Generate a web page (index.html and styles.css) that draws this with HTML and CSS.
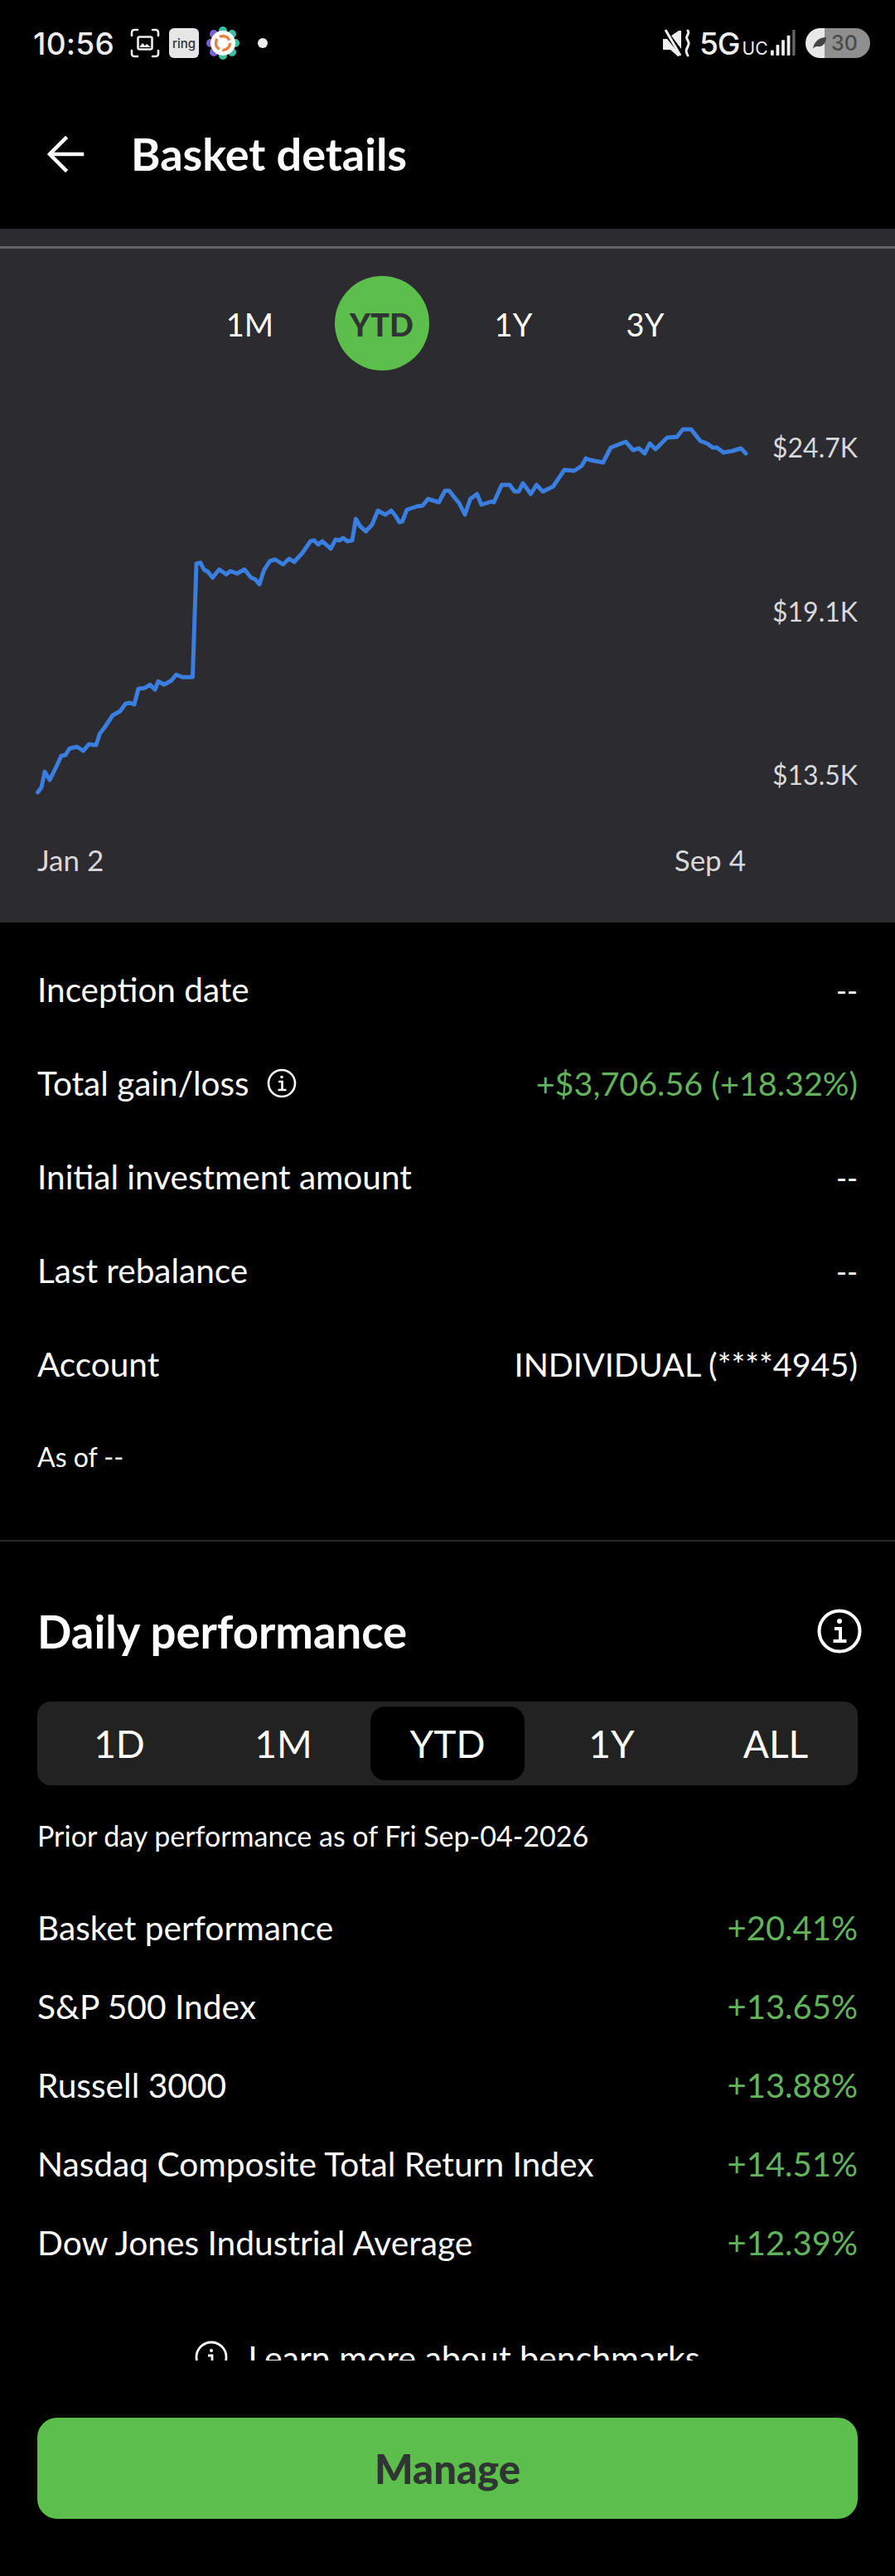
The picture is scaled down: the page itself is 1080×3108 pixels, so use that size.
FILE: index.html
```html
<!DOCTYPE html>
<html lang="en">
<head>
<meta charset="utf-8">
<title>Basket details</title>
<link rel="stylesheet" href="styles.css">
</head>
<body>
<div class="screen">
  <div class="status">
    <div class="status-left">
      <span class="clock">10:56</span>
      <svg class="ic-shot" viewBox="0 0 36 36" width="36" height="36" fill="none" stroke="#eee" stroke-width="2.6" stroke-linecap="round">
        <path d="M2 9V5a3 3 0 0 1 3-3h4M27 2h4a3 3 0 0 1 3 3v4M34 27v4a3 3 0 0 1-3 3h-4M9 34H5a3 3 0 0 1-3-3v-4"/>
        <rect x="9.500" y="10.500" width="17" height="15" rx="2"/>
        <path d="M11 23l4-5 3 3 2-2 5 4z" fill="#eee" stroke="none"/>
      </svg>
      <span class="ring">ring</span>
      <svg class="ic-flower" viewBox="0 0 40 40" width="40" height="40">
        <g fill="#7a63d8"><circle cx="9" cy="9" r="5"/><circle cx="5" cy="20" r="5"/><circle cx="9" cy="31" r="5"/></g>
        <g fill="#3dbfa4"><circle cx="20" cy="5" r="5"/><circle cx="31" cy="9" r="5"/><circle cx="35" cy="20" r="5"/><circle cx="31" cy="31" r="5"/><circle cx="20" cy="35" r="5"/></g>
        <circle cx="20" cy="20" r="15" fill="#fff"/>
        <circle cx="20" cy="20" r="8.500" fill="none" stroke="#e8803f" stroke-width="3.400" stroke-dasharray="14 3.800"/>
      </svg>
      <span class="dot"></span>
    </div>
    <div class="status-right">
      <svg class="ic-mute" viewBox="0 0 34 34" width="34" height="34" fill="#eee">
        <path d="M0 12h5L19 29v4l-1 0-9-8H0zM10 8l9-6h3v22z"/>
        <path d="M3 1l18 31" stroke="#eee" stroke-width="3"/>
        <path d="M30 2c3 4-3 6-1 10s3 5 1 9-3 6 0 11" fill="none" stroke="#eee" stroke-width="3" stroke-linecap="round"/>
      </svg>
      <span class="net">5G<small>UC</small></span>
      <svg class="ic-signal" viewBox="0 0 32 34" width="30" height="34" fill="#eee">
        <rect x="0" y="26" width="4" height="7" rx="1"/>
        <rect x="7" y="19" width="4" height="14" rx="1"/>
        <rect x="14" y="13" width="4" height="20" rx="1"/>
        <rect x="21" y="7" width="4" height="26" rx="1"/>
        <rect x="28" y="0" width="3.500" height="33" fill="#666"/>
      </svg>
      <span class="battery">
        <svg class="leaf" viewBox="0 0 18 16" width="18" height="16"><path d="M1 15C2 7 8 1 17 1c0 8-5 12-11 11-2 0-4 1-5 3z" fill="#444"/></svg>
        <span class="battery-num">30</span>
      </span>
    </div>
  </div>

  <div class="appbar">
    <svg class="ic-back" viewBox="0 0 48 48" width="48" height="48" fill="none" stroke="#fff" stroke-width="4.500" stroke-linecap="square">
      <path d="M44 24H6M24 5L5 24l19 19"/>
    </svg>
    <h1 class="title">Basket details</h1>
  </div>

  <div class="scroll">
    <section class="chart-panel">
      <div class="panel-rule"></div>
      <div class="range-tabs">
        <span class="range-tab">1M</span>
        <span class="range-tab range-tab-on">YTD</span>
        <span class="range-tab">1Y</span>
        <span class="range-tab">3Y</span>
      </div>
      <div class="plot">
        <svg class="plot-line" viewBox="40 500 870 470" width="870" height="470" fill="none" stroke="#3a7ee0" stroke-width="5" stroke-linejoin="round" stroke-linecap="round">
          <path d="M45.500 956L50 950 54 931 60 941 67 927 74 912 79 911 84 903 93 901 100.500 906 107 898 116 899 120.500 885 126 878 136 863 145 858 151.500 849 157 848 162 850 167 831 175 830 181 826 187 832 191 822 198 826 207 821 212.500 814 220 817 232.500 817 237 680 242 679 246 687 251 690 256.500 697 264.500 687 273 693 278 689 286 692 295 687 303 697 308 699 313 705 318.500 688 325.500 677 332 675 341.500 681 349 674 355 678 365 667 374.600 653 379 652 384 657 389 653 399 662 405 651 410 652 414 649 419 653 425 652 429.400 626 434.600 635 441.500 641 449 633 456 616 465 621 472 616 477 622 482 630 485.500 629 491 615 503 611 510 610 516.500 602 529.600 606 537 592 542 592 549 601 554 607 561 621 567.500 602 575.500 596 581 609 593 605 596 606 605.400 585 615 585 621 593 626 593 631 583 640.500 596 647.400 585 655 593 667.400 587 681 567 693 568 702 562 707 553 712 555 727.700 558 737 540 755 533 764 543 771 541 778 547 784 535 791 542 805 528 817 527 824 518 834 518 845 532 853 535 860 540 865 540 873 546 884 544 894 541 900 547"/>
        </svg>
        <div class="y-axis">
          <span>$24.7K</span>
          <span>$19.1K</span>
          <span>$13.5K</span>
        </div>
      </div>
      <div class="x-axis">
        <span>Jan 2</span>
        <span>Sep 4</span>
      </div>
    </section>

    <section class="facts">
      <div class="fact"><span>Inception date</span><span class="fact-empty">--</span></div>
      <div class="fact">
        <span class="with-icon">Total gain/loss
          <svg class="ic-info-sm" viewBox="0 0 36 36" width="36" height="36" fill="none" stroke="#fff" stroke-width="2.600">
            <circle cx="18" cy="18" r="16"/>
            <path d="M14 16h4.500v10M13.500 26h10"/>
            <circle cx="18" cy="10.500" r="1.800" fill="#fff" stroke="none"/>
          </svg>
        </span>
        <span class="gain fact-value">+$3,706.56 (+18.32%)</span>
      </div>
      <div class="fact"><span>Initial investment amount</span><span class="fact-empty">--</span></div>
      <div class="fact"><span>Last rebalance</span><span class="fact-empty">--</span></div>
      <div class="fact"><span>Account</span><span class="fact-value">INDIVIDUAL (****4945)</span></div>
      <div class="as-of">As of --</div>
    </section>

    <section class="daily">
      <div class="daily-head">
        <h2 class="daily-title">Daily performance</h2>
        <svg class="ic-info-lg" viewBox="0 0 54 54" width="54" height="54" fill="none" stroke="#fff" stroke-width="4">
          <circle cx="27" cy="27" r="24.500"/>
          <path d="M21 24h7v15M19.500 39h16"/>
          <circle cx="27" cy="15" r="3" fill="#fff" stroke="none"/>
        </svg>
      </div>
      <div class="segments">
        <span class="segment">1D</span>
        <span class="segment">1M</span>
        <span class="segment segment-on">YTD</span>
        <span class="segment">1Y</span>
        <span class="segment">ALL</span>
      </div>
      <p class="prior">Prior day performance as of Fri Sep-04-2026</p>
      <div class="perf"><span>Basket performance</span><span class="gain perf-value">+20.41%</span></div>
      <div class="perf"><span>S&amp;P 500 Index</span><span class="gain perf-value">+13.65%</span></div>
      <div class="perf"><span>Russell 3000</span><span class="gain perf-value">+13.88%</span></div>
      <div class="perf"><span>Nasdaq Composite Total Return Index</span><span class="gain perf-value">+14.51%</span></div>
      <div class="perf"><span>Dow Jones Industrial Average</span><span class="gain perf-value">+12.39%</span></div>
      <div class="learn">
        <svg class="ic-info-md" viewBox="0 0 40 40" width="40" height="40" fill="none" stroke="#fff" stroke-width="2.800">
          <circle cx="20" cy="20" r="18"/>
          <path d="M16 18h5v11M15 29h11"/>
          <circle cx="20" cy="12" r="2" fill="#fff" stroke="none"/>
        </svg>
        <span>Learn more about benchmarks</span>
      </div>
    </section>
  </div>

  <div class="footer">
    <button class="manage" type="button">Manage</button>
  </div>
</div>
</body>
</html>
```

FILE: styles.css
```css
* { box-sizing: border-box; }
html, body { margin: 0; padding: 0; background: #000; }
body { font-family: "Lato", "Noto Sans", sans-serif; color: #fff; }
.screen { width: 1080px; height: 3108px; overflow: hidden; background: #000; }

/* status bar */
.status { height: 104px; padding: 0 30px 0 40px; display: flex; align-items: center; justify-content: space-between; }
.status-left, .status-right { display: flex; align-items: center; }
.clock { font-family: "Inter", sans-serif; font-size: 37px; font-weight: 500; color: #eee; letter-spacing: 0.3px; width: 117px; }
.ic-shot { margin-right: 11px; }
.ring { width: 36px; height: 36px; border-radius: 6px; background: #e6e6e6; color: #333; font-family: "Inter", sans-serif; font-size: 15px; font-weight: 500; display: flex; align-items: center; justify-content: center; margin-right: 9px; }
.dot { width: 12px; height: 12px; border-radius: 50%; background: #eee; margin-left: 22px; }
.ic-mute { margin-right: 10px; }
.net { font-family: "Inter", sans-serif; font-size: 37px; font-weight: 500; color: #eee; letter-spacing: -1px; width: 86px; white-space: nowrap; }
.net small { font-size: 21px; letter-spacing: 0; font-weight: 400; margin-left: 3px; }
.ic-signal { margin-right: 12px; }
.battery { width: 78px; height: 36px; border-radius: 18px; background: linear-gradient(to right, #e8e8e8 0 30%, #8f8f8f 30% 100%); display: flex; align-items: center; padding-left: 8px; gap: 5px; }
.battery-num { font-family: "Inter", sans-serif; font-size: 25px; font-weight: 500; color: #4a4a4a; line-height: 1; }

/* app bar */
.appbar { height: 172px; padding: 0 0 8px 55px; display: flex; align-items: center; gap: 55px; }
.title { margin: 0; font-size: 54px; font-weight: 700; line-height: 1.2; }

.scroll { height: 2572px; overflow: hidden; }

/* chart panel */
.chart-panel { height: 837px; background: #2b2b30; padding-top: 21px; }
.panel-rule { height: 3px; background: #636367; }
.range-tabs { display: flex; justify-content: center; gap: 45px; margin-top: 33px; }
.range-tab { width: 114px; height: 114px; border-radius: 50%; padding-top: 2px; display: flex; align-items: center; justify-content: center; font-size: 38px; color: #fff; }
.range-tab-on { background: #5cbf4c; color: #2f3532; font-weight: 900; }
.plot { display: flex; margin-top: 53px; padding: 0 45px 0 40px; }
.plot-line { flex: none; display: block; }
.y-axis { margin-left: auto; height: 470px; padding: 20px 0 15px; display: flex; flex-direction: column; justify-content: space-between; align-items: flex-end; font-size: 32px; line-height: 40px; color: #d8d8da; }
.x-axis { display: flex; justify-content: space-between; width: 900px; padding-left: 45px; margin-top: 47px; font-size: 35px; line-height: 40px; color: #d8d8da; }

/* facts */
.facts { padding: 24px 45px 46px; border-bottom: 2px solid #2a2a2a; }
.fact { height: 113px; display: flex; align-items: center; justify-content: space-between; font-size: 40.500px; }
.fact-value { font-size: 39.500px; }
.fact-empty { font-size: 35px; }
.with-icon { display: flex; align-items: center; gap: 21px; }
.gain { color: #62b35a; }
.as-of { height: 110px; display: flex; align-items: center; font-size: 32px; }

/* daily */
.daily { padding: 0 45px; }
.daily-head { height: 80px; margin-top: 68px; display: flex; align-items: center; justify-content: space-between; }
.daily-title { margin: 0; font-size: 54.500px; font-weight: 700; }
.ic-info-lg { margin-right: -5px; }
.segments { display: grid; grid-template-columns: repeat(5, 1fr); height: 101px; margin-top: 45px; padding: 6px 0; background: #222; border-radius: 16px; }
.segment { display: flex; align-items: center; justify-content: center; font-size: 46px; border-radius: 18px; }
.segment-on { background: #000; margin: 0 6px; }
.prior { margin: 41px 0 0; height: 40px; font-size: 34px; line-height: 40px; }
.perf { height: 95px; display: flex; align-items: center; justify-content: space-between; font-size: 40.700px; }
.perf-value { font-size: 40px; }
.prior + .perf { margin-top: 43px; }
.learn { margin-top: 71px; height: 40px; display: flex; align-items: center; justify-content: center; gap: 24px; font-size: 41px; }

/* footer */
.footer { padding: 69px 45px 0; }
.manage { display: block; width: 100%; height: 122px; border: 0; border-radius: 24px; background: #5cbf4c; color: #2f3532; font-family: inherit; font-size: 49px; font-weight: 900; }
```
